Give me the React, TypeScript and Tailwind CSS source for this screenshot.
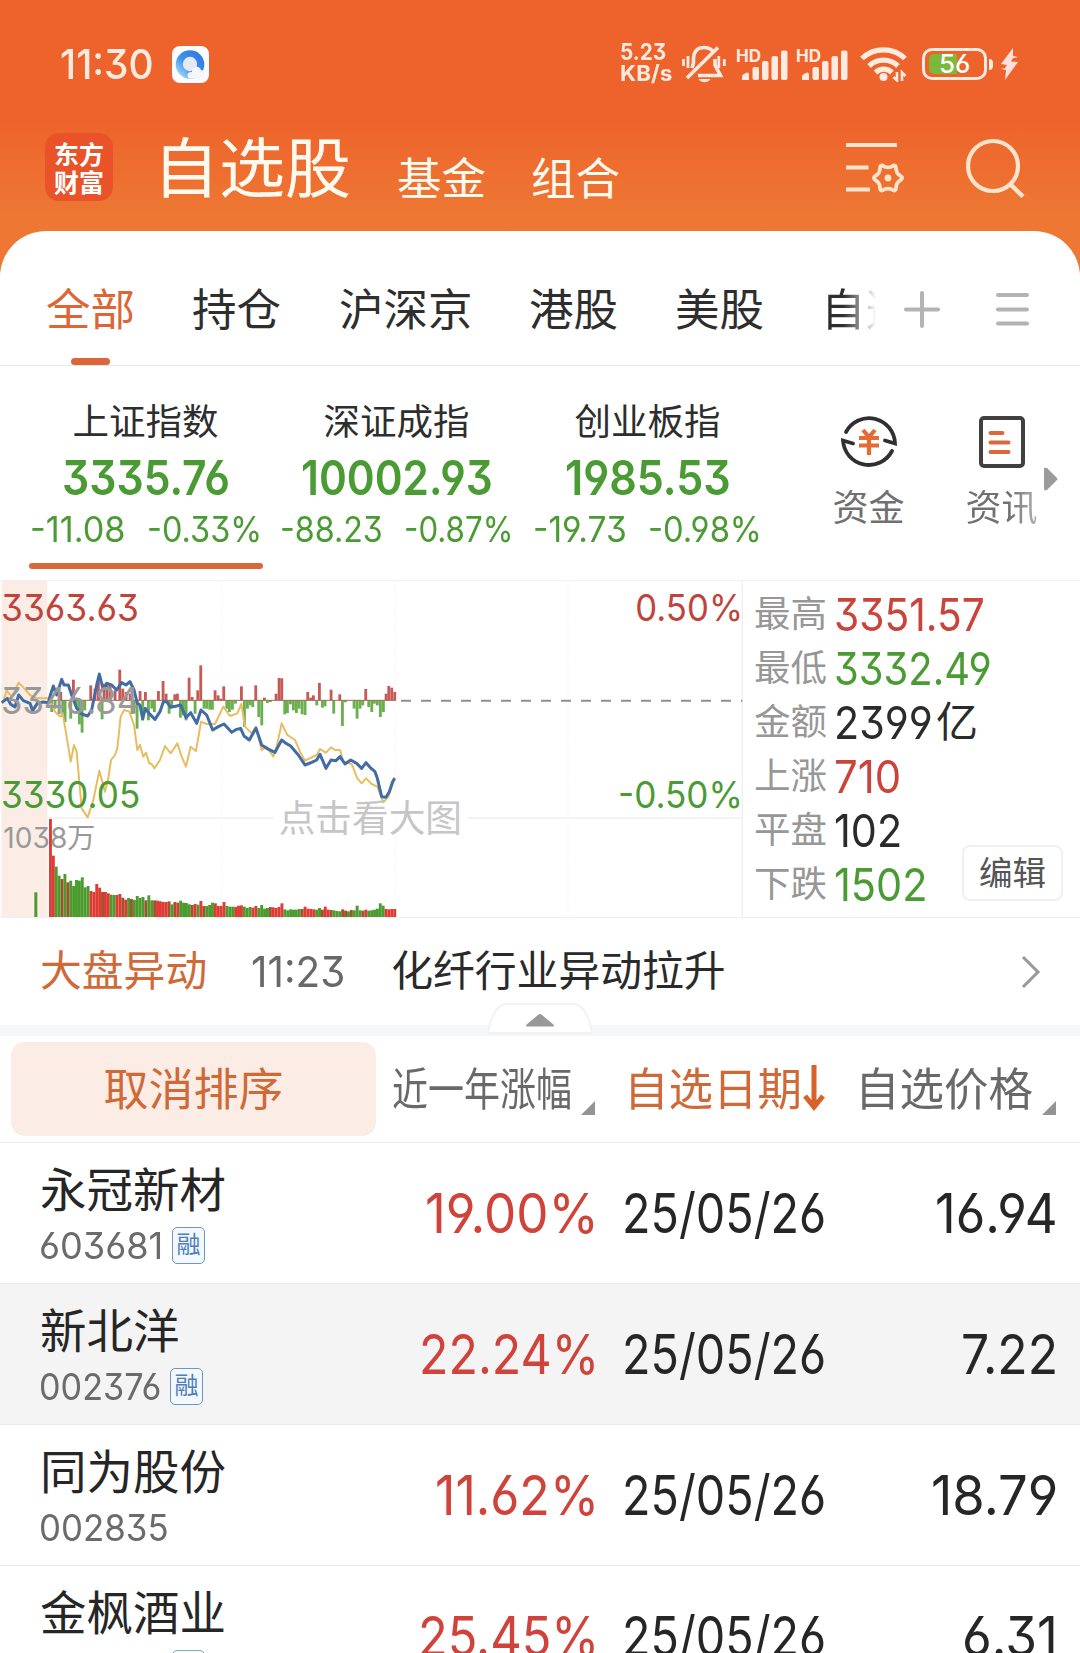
import { useLayoutEffect, useRef, useState, type ReactNode } from 'react';

const tabs = [
    { label: '持仓', width: 'w-[147px]' },
    { label: '沪深京', width: 'w-[190px]' },
    { label: '港股', width: 'w-[146px]' },
    { label: '美股', width: 'w-[150px]' },
];

const indices = [
    { name: '上证指数', value: '3335.76', w: 168, diff: '-11.08', dw: 96, pct: '-0.33%', pw: 115, active: true },
    { name: '深证成指', value: '10002.93', w: 192, diff: '-88.23', dw: 103, pct: '-0.87%', pw: 109, active: false },
    { name: '创业板指', value: '1985.53', w: 166, diff: '-19.73', dw: 94, pct: '-0.98%', pw: 114, active: false },
];

const stats = [
    { label: '最高', value: '3351.57', w: 151, color: 'text-[#cb443c]' },
    { label: '最低', value: '3332.49', w: 158, color: 'text-[#4b9b35]' },
    { label: '金额', value: '2399', w: 99, unit: '亿', color: 'text-[#2b2b2b]' },
    { label: '上涨', value: '710', w: 67, color: 'text-[#cb443c]' },
    { label: '平盘', value: '102', w: 68, color: 'text-[#2b2b2b]' },
    { label: '下跌', value: '1502', w: 94, color: 'text-[#4b9b35]' },
];

const stocks = [
    { name: '永冠新材', code: '603681', cw: 124, tag: 'blue', pct: '19.00%', w: 174, price: '16.94', prw: 123 },
    { name: '新北洋', code: '002376', cw: 122, tag: 'blue', pct: '22.24%', w: 180, price: '7.22', prw: 97 },
    { name: '同为股份', code: '002835', cw: 130, tag: '', pct: '11.62%', w: 164, price: '18.79', prw: 127 },
    { name: '金枫酒业', code: '600616', cw: 124, tag: 'teal', pct: '25.45%', w: 181, price: '6.31', prw: 96 },
];

// Chart units are thirds of a pixel
const priceLine =
    '5,398 22,385 32,403 45,411 56,375 70,392 90,400 98,422 112,400 130,396 145,398 152,372 160,348 170,375 185,328 192,345 205,345 215,375 230,415 245,432 263,438 275,420 290,345 298,312 310,360 320,340 335,345 350,360 365,338 378,345 390,335 402,360 412,400 420,405 428,447 436,415 445,428 465,448 480,425 490,395 500,395 512,412 530,408 542,405 558,443 572,428 590,460 603,420 620,435 638,480 655,470 672,462 695,487 710,478 722,475 732,498 748,510 768,475 785,525 800,535 825,547 845,510 858,520 872,528 895,555 915,585 935,577 950,570 960,553 978,595 993,570 1008,572 1020,560 1035,582 1052,570 1070,580 1085,595 1098,578 1110,592 1125,605 1132,625 1145,680 1158,682 1168,665 1178,635 1184,625';
const averageLine =
    '8,400 20,362 35,380 56,338 68,350 90,375 110,385 145,385 155,405 165,425 180,440 188,430 200,500 212,575 222,525 230,545 245,715 263,742 280,690 298,602 315,665 325,625 333,570 345,555 352,535 362,440 372,420 388,425 402,465 412,540 420,525 430,560 438,548 448,580 455,582 463,595 480,570 495,528 512,550 532,520 545,560 558,590 572,530 588,543 603,455 620,462 645,462 670,410 690,438 712,430 724,402 735,470 755,490 768,470 785,540 800,530 820,560 830,530 845,460 862,495 885,510 900,545 915,572 950,555 960,537 978,548 993,532 1005,540 1020,540 1030,575 1055,582 1072,625 1085,640 1098,625 1115,642 1132,650 1150,697 1165,680 1184,622';

// [x, height], negative goes below the zero line
const momentum = [
    [155, -35], [165, -25], [182, 25], [188, -50], [195, -65], [212, -55], [220, 62], [229, -20], [238, -72], [246, -97], [254, -30], [272, 45], [285, 35],
    [295, 70], [306, -57], [312, 50], [321, 55], [330, 45], [345, 30], [359, 92], [368, 35], [378, 25], [390, 20], [402, -40], [411, -85], [420, 28],
    [428, -60], [436, 25], [445, -60], [455, -25], [463, -35], [475, 28], [489, 58], [498, 20], [507, -40], [515, -20], [524, 18], [532, 20],
    [541, -52], [550, -45], [558, -60], [567, 68], [576, 10], [585, -40], [593, 30], [602, 105], [612, -25], [620, -25], [629, -28], [637, -28],
    [645, 30], [654, 15], [662, 5], [671, 42], [680, -25], [688, -35], [697, -28], [706, -10], [724, 42], [733, -80], [742, -25], [750, -15],
    [758, -20], [767, 45], [776, -50], [785, -75], [793, 8], [802, -8], [811, -5], [828, 20], [837, 67], [845, 66], [854, -42], [862, -38], [871, -12],
    [880, -30], [889, -38], [897, -25], [906, -42], [915, -44], [923, 25], [932, 8], [940, 15], [950, -15], [958, 52], [967, -22], [975, -18],
    [993, 32], [1001, -40], [1019, 18], [1027, -77], [1036, -6], [1062, -25], [1071, -55], [1080, -25], [1088, -15], [1097, 34], [1106, -20],
    [1115, -35], [1123, -10], [1132, -15], [1141, -50], [1150, -35], [1158, 20], [1166, 43], [1175, 38], [1184, 25],
];

const volumes = [
    294, 184, 151, 124, 114, 129, 104, 109, 93, 111, 109, 119, 89, 93, 78, 75, 99, 88, 75, 75, 71, 67, 66, 66, 69, 58, 52, 57, 54, 51, 63, 57, 60, 50, 65,
    50, 50, 49, 47, 45, 45, 47, 38, 45, 43, 49, 43, 42, 38, 36, 39, 37, 48, 33, 33, 36, 43, 41, 33, 33, 45, 33, 31, 31, 30, 34, 35, 31, 27, 30, 28, 33,
    27, 36, 25, 27, 30, 29, 27, 30, 41, 23, 20, 23, 22, 22, 24, 24, 31, 25, 24, 23, 22, 27, 22, 31, 22, 21, 20, 18, 17, 23, 19, 17, 21, 20, 34, 20,
    19, 22, 19, 20, 22, 25, 41, 34, 24, 23, 24, 24,
];
const volumeColors =
    'RRGGmGmGGGGGGGRRRRmRRGGRRmRGmGGGGmGGmRRRRmGmRGGGGmRGRmGGGRRRRGGGRRRGGGRRGGGGmRRRRGGGGGGmRRRRGGmRRmGGGmmGmGGGmRGGGGGGRRRR';
const colors: Record<string, string> = { R: '#df3b33', G: '#4b9b2f', m: '#a6502e' };

// Stretches or squeezes one line of text to a fixed width
function Fit({ w, className = '', children }: { w: number; className?: string; children: ReactNode }) {
    const ref = useRef<HTMLSpanElement>(null);
    const [scale, setScale] = useState(1);

    useLayoutEffect(() => {
        if (ref.current) setScale(w / ref.current.offsetWidth);
    }, [w]);

    return (
        <span className={`inline-block shrink-0 ${className}`} style={{ width: w }}>
            <span ref={ref} className="inline-block origin-left whitespace-nowrap" style={{ transform: `scaleX(${scale})` }}>
                {children}
            </span>
        </span>
    );
}

function Signal() {
    return (
        <svg className="h-[34px] w-[51px] overflow-visible" viewBox="0 0 51 34" fill="#ffeadf">
            <text x="-1" y="14.500" fontSize="17" fontWeight="700" textLength="25" lengthAdjust="spacingAndGlyphs">
                HD
            </text>
            <path d="M5 33v-3.500q0-2 2-2.500l3-1.500q2 0 2 2V33z" />
            <rect x="15.500" y="20" width="6.500" height="13" rx="2" />
            <rect x="25" y="14" width="6.500" height="19" rx="2" />
            <rect x="34.500" y="9" width="6.500" height="24" rx="2" />
            <rect x="44" y="3.500" width="6.500" height="29.500" rx="2" />
        </svg>
    );
}

function StatusBar() {
    return (
        <div className="flex h-[122px] items-center pt-[6px] pl-[60px] text-[#ffeadf]">
            <Fit w={94} className="text-[41px] font-medium">
                11:30
            </Fit>
            {/* Cloud ring app badge */}
            <svg className="ml-[18px] h-[37px] w-[37px]" viewBox="0 0 37 37">
                <defs>
                    <linearGradient id="ring" x1="1" y1="0" x2="0" y2="1">
                        <stop offset="0" stopColor="#2f6fe0" />
                        <stop offset="0.55" stopColor="#3f93ec" />
                        <stop offset="1" stopColor="#c5ecfb" />
                    </linearGradient>
                </defs>
                <rect width="37" height="37" rx="8" fill="#fbfcfe" />
                <circle cx="18" cy="18.500" r="14.300" fill="url(#ring)" />
                <circle cx="18" cy="18" r="7.200" fill="#e4e9f2" />
                <path d="M17 32.500c-3-3-1-7 3-6.500 0-6 7-7 9-2 3 0 5 4 3 8z" fill="#f4f8fd" />
            </svg>

            <div className="ml-[411px] flex w-[54px] flex-col gap-0 pb-[3px] font-bold">
                <Fit w={46} className="text-[23px]">
                    5.23
                </Fit>
                <Fit w={52} className="-mt-[2px] text-[22px]">
                    KB/s
                </Fit>
            </div>
            <svg className="ml-[8px] h-[38px] w-[44px]" viewBox="0 0 44 38" fill="none" stroke="#ffeadf" strokeWidth="3.600">
                <path d="M10 23l1.500-5v-4C11.500 6 16 2.500 22 2.500c4 0 6.500 1 8.500 3.500M33 14v6l5.500 10.500H16M5 33L36 2.500" />
                <path d="M1.500 14v7M6 11v12M36.800 11v12M42.300 14v7" strokeWidth="2.800" />
                <path d="M17 34.500q5.500 4.500 11 0z" fill="#ffeadf" strokeWidth="1" />
            </svg>
            <div className="ml-[11px] flex gap-[9px]">
                <Signal />
                <Signal />
            </div>
            <svg className="ml-[12px] h-[36px] w-[48px]" viewBox="0 0 48 36" fill="none" stroke="#ffeadf" strokeWidth="5.200">
                <path d="M2 12.500a31 31 0 0 1 43 0M9 20a21 21 0 0 1 29 0M15.500 26.500a12 12 0 0 1 16.500 0" />
                <circle cx="23.500" cy="31" r="4" fill="#ffeadf" stroke="none" />
                <path d="M37 26v8.500l-3.500-3.500M42 35v-8.500l3.500 3.500" strokeWidth="2.600" />
            </svg>
            <div className="ml-[14px] flex items-center">
                <div className="relative flex h-[32px] w-[65px] items-center justify-center rounded-[10px] border-[3px] border-[#ffeadf]">
                    <span className="absolute top-[3px] left-[4px] h-[20px] w-[28px] rounded-l-[5px] bg-[#7cb83a]" />
                    <Fit w={31} className="relative text-[26px] font-medium text-white">
                        56
                    </Fit>
                </div>
                <span className="ml-[2px] h-[11px] w-[4px] rounded-r bg-[#ffeadf]" />
            </div>
            <svg className="ml-[7px] h-[32px] w-[18px]" viewBox="0 0 18 32" fill="#ffe0dc">
                <path d="M13 0L1 16l6 1-2 3-4 1 5 1-1 10L18 14l-7-.5 1.500-3L18 9l-5-1z" />
            </svg>
        </div>
    );
}

function Header() {
    return (
        <div className="flex h-[109px] items-center pl-[45px] text-[#fffaf0]">
            <div className="mb-[20px] flex h-[68px] w-[68px] flex-col items-center justify-center rounded-[14px] bg-[#ea5329] font-['Noto_Sans_CJK_SC',sans-serif] text-[25px] leading-[28px] font-bold text-white">
                <span>东方</span>
                <span>财富</span>
            </div>
            <Fit w={198} className="mb-[16px] ml-[40px] text-[65px]">
                自选股
            </Fit>
            <span className="mt-[6px] ml-[46px] text-[44.5px]">基金</span>
            <span className="mt-[6px] ml-[45px] text-[44.5px]">组合</span>

            <svg className="mb-[18px] ml-[226px] h-[58px] w-[62px]" viewBox="0 0 62 58" fill="none" stroke="#ffe3cc" strokeWidth="4.200">
                <path d="M0 6h51M0 28.500h22.500M0 50.500h24" />
                <path
                    transform="translate(4.200 3.900) scale(.9)"
                    d="M55.500 36.400Q60 39 55.500 41.600Q51.100 44.300 51 49.500Q51 54.600 46.500 52Q42 49.500 37.500 52Q33 54.600 33 49.500Q32.900 44.300 28.500 41.600Q24 39 28.500 36.400Q32.900 33.700 33 28.500Q33 23.400 37.500 26Q42 28.500 46.500 26Q51 23.400 51 28.500Q51.100 33.700 55.500 36.400Z"
                />
                <circle cx="42" cy="39" r="3.400" fill="#ffe3cc" stroke="none" />
            </svg>
            <svg className="mb-[18px] ml-[58px] h-[60px] w-[60px]" viewBox="0 0 60 60" fill="none" stroke="#ffe3cc" strokeWidth="4.200">
                <circle cx="27" cy="28" r="25" />
                <path d="M44 46l13 12.500" strokeWidth="4.500" />
            </svg>
        </div>
    );
}

function Tabs() {
    return (
        <div className="flex h-[135px] border-b border-[#e6e6e6] pl-[46px] text-[44.5px] text-[#2e2e2e]">
            <div className="flex w-[146px] flex-col">
                <span className="mt-[57px] h-[45px] text-[#dd6636]">全部</span>
                <span className="mt-[25px] ml-[25px] h-[7px] w-[39px] rounded-full bg-[#d9673a]" />
            </div>
            {tabs.map((tab) => (
                <span key={tab.label} className={`mt-[57px] shrink-0 ${tab.width}`}>
                    {tab.label}
                </span>
            ))}
            <span className="mt-[57px] ml-[-4px] h-[45px] w-[55px] shrink-0 overflow-hidden bg-linear-to-r from-[#2e2e2e] from-40% to-white bg-clip-text whitespace-nowrap text-transparent">
                自选
            </span>
            <svg className="mt-[57px] ml-[27px] h-[42px] w-[128px]" viewBox="0 0 128 42" stroke="#b3b3b3" strokeWidth="4" strokeLinecap="round">
                <path d="M3 21.500h32M19 5v33M95 7h29M95 21.500h29M95 35.500h29" />
            </svg>
        </div>
    );
}

function IndexStrip() {
    return (
        <div className="relative flex h-[214px] pl-[20px]">
            {indices.map((item) => (
                <div key={item.name} className="flex w-[251px] flex-col items-center pt-[36px]">
                    <span className="flex h-10 items-center text-[36.5px] text-[#2e2e2e]">{item.name}</span>
                    <Fit w={item.w} className="mt-[12px] h-[50px] text-[48px] font-semibold text-[#4b9b35]">
                        {item.value}
                    </Fit>
                    <div className="mt-[7px] flex h-[36px] items-center gap-[21px] text-[35px] text-[#4b9b35]">
                        <Fit w={item.dw}>{item.diff}</Fit>
                        <Fit w={item.pw}>{item.pct}</Fit>
                    </div>
                    {item.active && <span className="mt-[16px] h-[6px] w-[234px] rounded-full bg-[#d9673a]" />}
                </div>
            ))}
            <div className="ml-[29px] flex w-[133px] flex-col items-center pt-[46px] text-[36px] text-[#707070]">
                <svg className="h-[60px] w-[60px]" viewBox="0 0 60 60" fill="none" strokeWidth="3.800">
                    <g stroke="#303030" strokeLinecap="round">
                        <path d="M7 20A26 26 0 0 1 56 31.500L46 28.500" />
                        <path d="M53 39A26 26 0 0 1 4 28.500L14 31.500" />
                    </g>
                    <path d="M24 18l6 7 6-7M20 26h20M20 33.500h20M30 25v18" stroke="#e66a34" strokeWidth="4.200" />
                </svg>
                <span className="mt-[18px]">资金</span>
            </div>
            <div className="flex w-[133px] flex-col items-center pt-[46px] text-[36px] text-[#707070]">
                <svg className="h-[60px] w-[60px]" viewBox="0 0 60 60" fill="none" strokeWidth="4" strokeLinecap="round">
                    <rect x="9" y="6" width="42" height="48" rx="3" stroke="#404040" />
                    <path d="M18.500 21h12M18.500 30.500h18M18.500 40h18" stroke="#d9693a" />
                </svg>
                <span className="mt-[18px] bg-linear-to-r from-[#707070] from-60% to-[#b5b5b5] bg-clip-text text-transparent">资讯</span>
            </div>
            <svg className="absolute top-[101px] right-[22px] h-[24px] w-[14px]" viewBox="0 0 14 24" fill="#9b9b9b">
                <path d="M0 2q0-2 3-1l10 10q1 1 0 2L3 23q-3 1-3-1z" />
            </svg>
        </div>
    );
}

function Chart() {
    return (
        <svg className="h-[336px] w-[743px] shrink-0" viewBox="0 33 2229 1008" fill="none">
            <rect x="4" y="33" width="138" height="1008" fill="#fbede6" />
            <g stroke="#efefef" strokeWidth="3">
                <path d="M664 33V1041M1185 33V1041M1704 33V1041" strokeDasharray="4 6" />
                <path d="M142 744H820M1405 744H2227M2227 33V1041" strokeWidth="4" />
            </g>
            <path d="M1203 392H2227" stroke="#8f8f8f" strokeWidth="6" strokeDasharray="30 30" />
            <text x="10" y="834" fontSize="86" fill="#999" textLength="276" lengthAdjust="spacingAndGlyphs">
                1038万
            </text>

            {momentum.map(([x, h]) => (
                <rect key={x} x={x - 4} y={h > 0 ? 391 - h : 391} width="8.500" height={Math.abs(h)} fill={h > 0 ? '#c65a55' : '#6bb04e'} />
            ))}
            <path d="M147 391H1188" stroke="#a06a50" strokeWidth="3" />

            <rect x="103" y="967" width="9" height="74" fill="#4b9b2f" />
            {volumes.map((h, i) => (
                <rect key={i} x={147 + i * 8.68} y={1041 - h} width="8.700" height={h} fill={colors[volumeColors[i] ?? 'G']} />
            ))}

            <polyline points={averageLine} stroke="#e8bd62" strokeWidth="6" strokeLinejoin="round" />
            <polyline points={priceLine} stroke="#416ca6" strokeWidth="9" strokeLinejoin="round" />

            <g fontSize="111">
                <text x="3" y="153" fill="#c0443e" textLength="414" lengthAdjust="spacingAndGlyphs">
                    3363.63
                </text>
                <text x="3" y="432" fill="#999" textLength="414" lengthAdjust="spacingAndGlyphs">
                    3346.84
                </text>
                <text x="3" y="713" fill="#4b9b35" textLength="418" lengthAdjust="spacingAndGlyphs">
                    3330.05
                </text>
                <text x="1906" y="153" fill="#c0443e" textLength="323" lengthAdjust="spacingAndGlyphs">
                    0.50%
                </text>
                <text x="1854" y="713" fill="#4b9b35" textLength="375" lengthAdjust="spacingAndGlyphs">
                    -0.50%
                </text>
                <text x="836" y="787" fill="#c6c6c6" textLength="550" lengthAdjust="spacingAndGlyphs">
                    点击看大图
                </text>
            </g>
        </svg>
    );
}

function SortCorner() {
    return (
        <svg className="mt-[37px] h-[14px] w-[14px]" viewBox="0 0 14 14" fill="#949494">
            <path d="M14 0V14H0z" />
        </svg>
    );
}

export default function App() {
    return (
        <div className="h-[1653px] w-[1080px] overflow-hidden bg-linear-to-b from-[#ee622b] from-[115px] to-[#ed7733] to-[215px] font-[Inter,'Noto_Sans_CJK_SC',sans-serif] leading-none [font-feature-settings:'case','cv03','cv04','cv09']">
            <StatusBar />
            <Header />
            <main className="rounded-t-[46px] bg-white">
                <Tabs />
                <IndexStrip />

                {/* Intraday chart and market breadth */}
                <div className="relative flex h-[338px] border-y border-[#f0f0f0]">
                    <Chart />
                    <div className="pt-[6px] pl-[11px]">
                        {stats.map((stat) => (
                            <div key={stat.label} className="flex h-[54px] items-center">
                                <span className="w-[80px] text-[36.5px] text-[#979797]">{stat.label}</span>
                                <Fit w={stat.w} className={`text-[45px] ${stat.color}`}>
                                    {stat.value}
                                </Fit>
                                {stat.unit && <span className={`ml-[3px] text-[42px] ${stat.color}`}>{stat.unit}</span>}
                            </div>
                        ))}
                    </div>
                    <button className="absolute top-[264px] right-[17px] h-[56px] w-[101px] rounded-lg border-2 border-[#f0f0f0] bg-white pt-[2px] text-[33.5px] text-[#555]">
                        编辑
                    </button>
                </div>

                {/* Market movement ticker */}
                <div className="relative flex h-[107px] items-center pl-[40px] text-[41.8px]">
                    <span className="text-[#cf6a38]">大盘异动</span>
                    <Fit w={94} className="ml-[44px] text-[43px] text-[#686868]">
                        11:23
                    </Fit>
                    <span className="ml-[46px] text-[#2a2a2a]">化纤行业异动拉升</span>
                    <svg className="ml-[295px] h-[34px] w-[20px]" viewBox="0 0 20 34" fill="none" stroke="#999" strokeWidth="3">
                        <path d="M2 2l15 15L2 32" />
                    </svg>
                    <svg className="absolute top-[84px] left-[487px] z-10 h-[32px] w-[106px]" viewBox="0 0 106 32">
                        <path d="M1 31Q6 2 20 2H86Q100 2 105 31Z" fill="#fff" stroke="#f1f2f3" strokeWidth="2" />
                        <path d="M39 23L51 13q2-2 4 0L67 23q0 1.500-1 1.500H40q-1 0-1-1.500z" fill="#999" />
                    </svg>
                </div>
                <div className="h-[11px] bg-[#f5f7f9]" />

                <div className="flex h-[107px] items-center border-b border-[#ebebeb] pl-[11px] text-[45px] text-[#696969]">
                    <button className="h-[94px] w-[365px] rounded-[14px] bg-[#fbede5] text-[45px] text-[#cf6a38]">取消排序</button>
                    <Fit w={180} className="ml-[16px]">
                        近一年涨幅
                    </Fit>
                    <span className="ml-[9px]">
                        <SortCorner />
                    </span>
                    <Fit w={178} className="ml-[29px] text-[#cf6a38]">
                        自选日期
                    </Fit>
                    <svg className="mb-[2px] ml-[1px] h-[46px] w-[22px]" viewBox="0 0 22 46" fill="none" stroke="#d9622c" strokeWidth="5">
                        <path d="M11 0V41M2 31l9 11 9-11" />
                    </svg>
                    <Fit w={178} className="ml-[30px]">
                        自选价格
                    </Fit>
                    <span className="ml-[9px]">
                        <SortCorner />
                    </span>
                </div>

                {stocks.map((stock, index) => (
                    <div
                        key={stock.code}
                        className={`flex h-[141px] items-center border-b border-[#ebebeb] pl-[39px] text-[55px] text-[#262626] ${index === 1 ? 'bg-[#f4f4f4]' : ''}`}
                    >
                        <div className="flex w-[356px] flex-col pt-[9px]">
                            <span className="flex h-[50px] items-center pl-[1px] text-[46.5px]">{stock.name}</span>
                            <div className="mt-[5px] flex h-[50px] items-center">
                                <Fit w={stock.cw} className="text-[37px] text-[#6b6b6b]">
                                    {stock.code}
                                </Fit>
                                {stock.tag && (
                                    <span
                                        className={`ml-[9px] flex h-[37px] w-[33px] items-center justify-center rounded-[5px] border-[1.5px] text-[24px] ${stock.tag === 'blue' ? 'border-[#6e96c4] bg-[#f3f8fd] text-[#4d7fbb]' : 'border-[#7fb0b5] bg-[#f2fafa] text-[#4c9aa0]'}`}
                                    >
                                        融
                                    </span>
                                )}
                            </div>
                        </div>
                        <div className="flex w-[204px] justify-end">
                            <Fit w={stock.w} className="text-[#cf433b]">
                                {stock.pct}
                            </Fit>
                        </div>
                        <Fit w={204} className="ml-[23px]">
                            25/05/26
                        </Fit>
                        <div className="flex flex-1 justify-end pr-[22px]">
                            <Fit w={stock.prw}>{stock.price}</Fit>
                        </div>
                    </div>
                ))}
            </main>
        </div>
    );
}
